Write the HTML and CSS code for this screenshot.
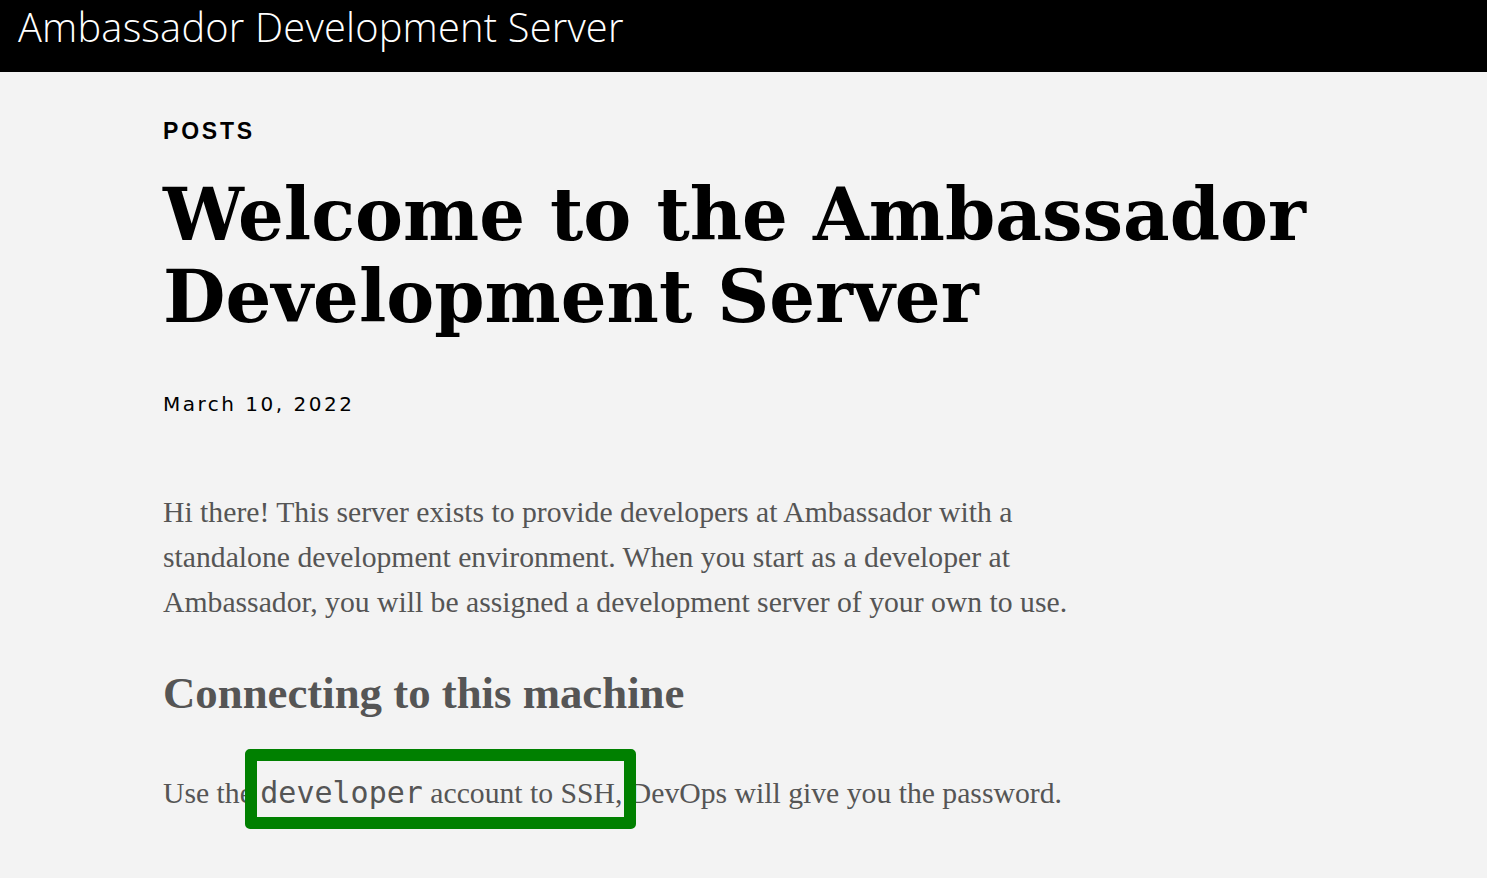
FILE: index.html
```html
<!DOCTYPE html>
<html>
<head>
<meta charset="utf-8">
<link rel="stylesheet" href="styles.css">
</head>
<body>
<header class="topbar">
  <div class="site-title">Ambassador Development Server</div>
</header>
<main class="content">
  <div class="section-label">POSTS</div>
  <h1 class="post-title">Welcome to the Ambassador Development Server</h1>
  <div class="post-date">March 10, 2022</div>
  <article class="post-body">
    <p>Hi there! This server exists to provide developers at Ambassador with a standalone development environment. When you start as a developer at Ambassador, you will be assigned a development server of your own to use.</p>
    <h2>Connecting to this machine</h2>
    <p class="ssh-line">Use the <span class="highlight"><code>developer</code> account to SSH,</span> DevOps will give you the password.</p>
  </article>
</main>
</body>
</html>
```
FILE: styles.css
```css
html, body {
  margin: 0;
  padding: 0;
  background: #f3f3f3;
}
body {
  min-height: 878px;
}
.topbar {
  background: #000;
  height: 72px;
  display: flex;
  align-items: flex-start;
  padding: 0 18px;
}
.site-title {
  font-family: "Open Sans", sans-serif;
  font-weight: 300;
  font-size: 39.8px;
  color: #fff;
  line-height: 54px;
  letter-spacing: 0.2px;
}
.content {
  padding: 0 163px;
}
.section-label {
  font-family: "Liberation Sans", Arial, sans-serif;
  font-weight: 700;
  font-size: 23px;
  letter-spacing: 2.8px;
  color: #000;
  margin-top: 46px;
  line-height: 26px;
}
.post-title {
  font-family: "DejaVu Serif", serif;
  font-weight: 700;
  font-size: 72px;
  line-height: 82px;
  color: #000;
  margin: 30px 0 0 0;
}
.post-date {
  font-family: "DejaVu Sans", sans-serif;
  font-size: 20px;
  letter-spacing: 2.5px;
  color: #000;
  margin-top: 54px;
}
.post-body {
  max-width: 940px;
  font-family: "Liberation Serif", "Times New Roman", serif;
  color: #555;
  font-size: 29.7px;
  line-height: 45px;
  margin-top: 74px;
}
.post-body p {
  margin: 0;
}
.post-body h2 {
  font-family: "Liberation Serif", "Times New Roman", serif;
  font-weight: 700;
  font-size: 44.8px;
  line-height: 52px;
  color: #555;
  margin: 42px 0 51px 0;
}
.highlight {
  position: relative;
  display: inline-block;
}
.highlight::after {
  content: "";
  position: absolute;
  left: -15px;
  right: -14px;
  top: -21px;
  bottom: -13px;
  border: 12px solid #008000;
  border-radius: 5px;
  pointer-events: none;
}
code {
  font-family: "DejaVu Sans Mono", monospace;
  font-size: 30px;
}
```
